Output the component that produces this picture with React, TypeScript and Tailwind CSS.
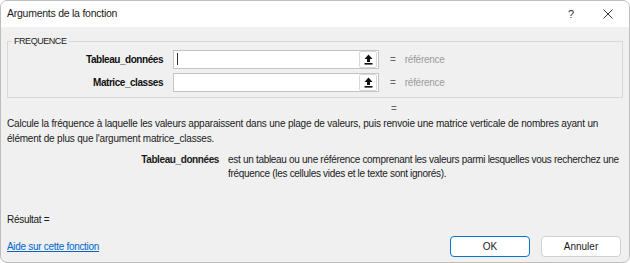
import React from 'react';

const UploadIcon = () => (
  <svg width="9" height="11" viewBox="0 0 9 11" fill="none">
    <path d="M4.5 0.5 L8.5 5 H6 V8 H3 V5 H0.5 Z" fill="#111" />
    <rect x="0.5" y="9" width="8" height="1.6" fill="#111" />
  </svg>
);

const ArgRow = ({ label, cursor }: { label: string; cursor?: boolean }) => (
  <div className="flex h-[19px] items-center">
    <div className="w-[155px] text-right text-[10px] font-bold tracking-[-0.45px] text-[#111]">{label}</div>
    <div className="ml-[10px] flex h-[19px] w-[206px] items-center border border-[#c4c4c4] bg-white">
      <div className="flex-1 pl-[3px]">
        {cursor && <div className="h-[12px] w-[1px] bg-[#333]" />}
      </div>
      <div className="mr-[1px] flex h-[17px] w-[18px] items-center justify-center rounded-[2px] border border-[#dadada] bg-white">
        <UploadIcon />
      </div>
    </div>
    <span className="ml-[11px] text-[10px] text-[#666]">=</span>
    <span className="ml-[9px] text-[10px] tracking-[-0.3px] text-[#9c9c9c]">référence</span>
  </div>
);

export default function App() {
  return (
    <div
      className="flex h-[263px] w-[630px] flex-col overflow-hidden rounded-[7px] border border-[#bdbdbd] bg-[#f0f0f0] text-[#1a1a1a]"
      style={{ fontFamily: '"Liberation Sans", Arial, sans-serif' }}
    >
      {/* Title bar */}
      <div className="flex h-[26px] shrink-0 items-center bg-white pl-[6px]">
        <span className="flex-1 text-[10.5px] tracking-[-0.25px] text-[#1a1a1a]">Arguments de la fonction</span>
        <span className="mr-[29px] text-[11px] text-[#333]">?</span>
        <svg className="mr-[16px]" width="10" height="10" viewBox="0 0 10 10">
          <path d="M0.5 0.5 L9.5 9.5 M9.5 0.5 L0.5 9.5" stroke="#333" strokeWidth="1" />
        </svg>
      </div>

      <div className="flex flex-1 flex-col px-[6px]">
        {/* Group box */}
        <fieldset className="mt-[8px] h-[63px] w-[616px] border border-[#d8d8d8] px-0 pb-0 pt-[1px]">
          <legend className="ml-[4px] px-[2px] text-[9px] tracking-[-0.45px] text-[#222]">FREQUENCE</legend>
          <div className="flex flex-col gap-[4px]">
            <ArgRow label="Tableau_données" cursor />
            <ArgRow label="Matrice_classes" />
          </div>
        </fieldset>

        <div className="mt-[5px] pl-[384px] text-[10px] leading-[12px] text-[#666]">=</div>

        <p className="mt-[1px] w-[600px] text-[10px] leading-[15px] tracking-[-0.2px] text-[#1a1a1a]">
          Calcule la fréquence à laquelle les valeurs apparaissent dans une plage de valeurs, puis renvoie une matrice verticale de nombres ayant un élément de plus que l'argument matrice_classes.
        </p>

        <div className="mt-[7px] flex">
          <div className="w-[212px] shrink-0 text-right text-[10px] font-bold leading-[14px] tracking-[-0.4px]">Tableau_données</div>
          <p className="ml-[9px] w-[395px] text-[10px] leading-[14px] tracking-[-0.3px]">
            est un tableau ou une référence comprenant les valeurs parmi lesquelles vous recherchez une fréquence (les cellules vides et le texte sont ignorés).
          </p>
        </div>

        <div className="mt-[32px] text-[10px] leading-[14px] tracking-[-0.3px]">Résultat =</div>

        <div className="mt-[9px] flex items-center">
          <a href="#" className="flex-1 text-[10px] tracking-[-0.3px] text-[#0066cc] underline">Aide sur cette fonction</a>
          <button className="h-[21px] w-[80px] rounded-[4px] border border-[#0a74d0] bg-white text-[10px] text-[#1a1a1a]">OK</button>
          <button className="ml-[11px] mr-[2px] h-[21px] w-[80px] rounded-[4px] border border-[#d0d0d0] bg-white text-[10px] text-[#1a1a1a]">Annuler</button>
        </div>
      </div>
    </div>
  );
}
